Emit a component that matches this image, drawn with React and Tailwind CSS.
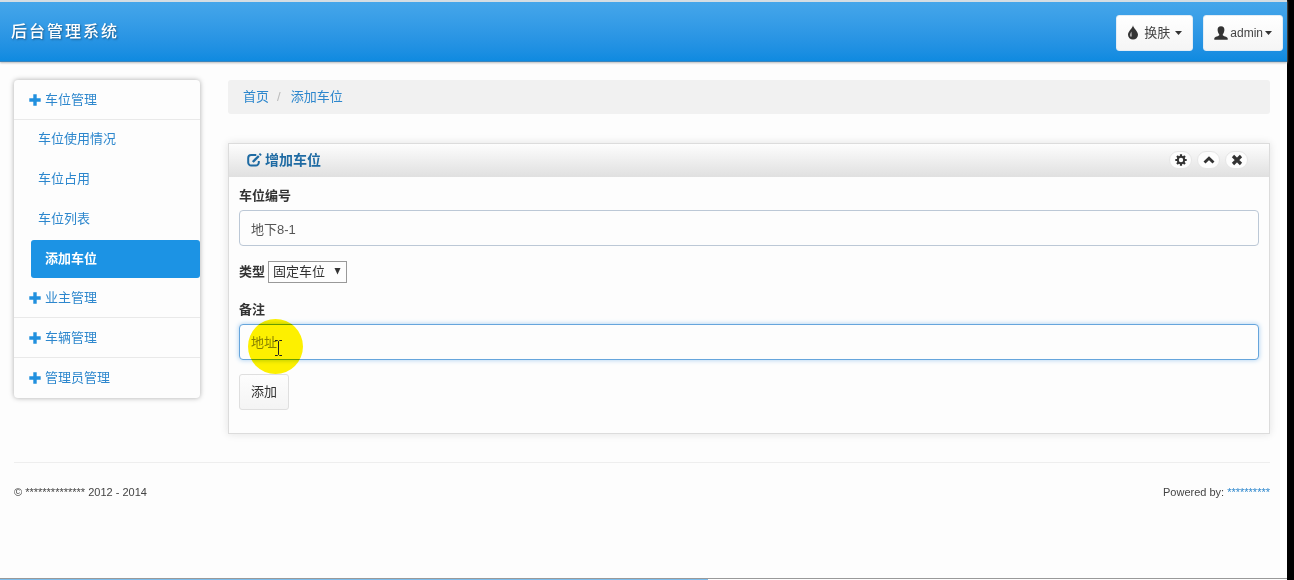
import React from "react";

function PlusIcon() {
  return (
    <svg className="h-3 w-3 shrink-0" viewBox="0 0 12 12" fill="#2190de" aria-hidden="true">
      <path d="M4.3 0.3h3.4v4h4v3.4h-4v4H4.3v-4h-4V4.3h4z" />
    </svg>
  );
}

function DropIcon() {
  return (
    <svg className="h-[15px] w-3 shrink-0" viewBox="0 0 12 15" fill="#333" aria-hidden="true">
      <path d="M6 0.3C6.4 3.6 11 6 11 9.8A5 4.8 0 0 1 1 9.8C1 6 5.6 3.6 6 0.3z" />
      <path d="M4.6 6.6C3.6 8 2.7 9 2.9 10.8c0.3 0.9 1.2 1.2 1.7 0.6C5.2 10.4 4.5 8.6 4.6 6.6z" fill="#a8a8a8" />
    </svg>
  );
}

function UserIcon() {
  return (
    <svg className="h-[14px] w-[14px] shrink-0" viewBox="0 0 14 14" fill="#333" aria-hidden="true">
      <path d="M7 0.3C9.4 0.3 10.5 1.9 10.4 4C10.3 6 9.6 7.2 8.8 8.2V9.3C8.9 10 13.4 10.9 13.7 12.2V13.7H0.3V12.2C0.6 10.9 5.1 10 5.2 9.3V8.2C4.4 7.2 3.7 6 3.6 4C3.5 1.9 4.6 0.3 7 0.3z" />
    </svg>
  );
}

function CaretIcon() {
  return (
    <svg className="h-1 w-[7px] shrink-0" viewBox="0 0 7 4" fill="#333" aria-hidden="true">
      <path d="M0 0h7L3.5 4z" />
    </svg>
  );
}

function EditIcon() {
  return (
    <svg className="h-[14px] w-[15px] shrink-0" viewBox="0 0 15 14" fill="none" stroke="#1f6ba3" aria-hidden="true">
      <path d="M9.3 2H4.2A3 3 0 0 0 1.2 5v4.5a3 3 0 0 0 3 3h4.6a3 3 0 0 0 3-3V8" strokeWidth="2" />
      <path d="M5.8 9L11.8 3" strokeWidth="2.4" />
      <path d="M12.6 2.2l1.3-1.3" strokeWidth="2.4" />
    </svg>
  );
}

function CogIcon() {
  return (
    <svg className="h-3 w-3" viewBox="0 0 12 12" aria-hidden="true">
      <g stroke="#333" strokeWidth="2.2">
        <path d="M6 0.3V2.5M6 9.5V11.7M0.3 6H2.5M9.5 6H11.7M2 2L3.4 3.4M8.6 8.6L10 10M10 2L8.6 3.4M3.4 8.6L2 10" />
      </g>
      <circle cx="6" cy="6" r="3.2" fill="none" stroke="#333" strokeWidth="2" />
    </svg>
  );
}

function ChevronUpIcon() {
  return (
    <svg className="h-3 w-3" viewBox="0 0 12 12" fill="none" stroke="#333" strokeWidth="2.8" aria-hidden="true">
      <path d="M1.5 8.6L6 4.2L10.5 8.6" />
    </svg>
  );
}

function RemoveIcon() {
  return (
    <svg className="h-3 w-3" viewBox="0 0 12 12" fill="none" stroke="#333" strokeWidth="3.2" aria-hidden="true">
      <path d="M2 2L10 10M10 2L2 10" />
    </svg>
  );
}

function TextCursor() {
  return (
    <svg className="h-4 w-[7px]" viewBox="0 0 7 16" fill="none" stroke="#222" aria-hidden="true">
      <path d="M0 0.5H2.5L3.5 1.5L4.5 0.5H7M3.5 1.5V14.5M0 15.5H2.5L3.5 14.5L4.5 15.5H7" />
    </svg>
  );
}

function HeaderButton({ icon, children }) {
  return (
    <button
      type="button"
      className="flex h-9 items-center gap-0.5 rounded-[3px] border border-[#e3edf5] bg-linear-to-b from-white to-[#f5f5f5] px-[10px] text-[#444]"
    >
      {icon}
      {children}
      <CaretIcon />
    </button>
  );
}

function MenuGroup({ label, items = [], last = false }) {
  return (
    <li>
      <a
        href="#"
        className={
          "flex h-10 items-center gap-1 pl-[15px] " +
          (last ? "" : "border-b border-[#e9e9e9]")
        }
      >
        <PlusIcon />
        <span>{label}</span>
      </a>
      {items.length > 0 && (
        <ul className="flex flex-col gap-0.5">
          {items.map((item) => (
            <li key={item.label}>
              {item.active ? (
                <a href="#" className="ml-[17px] flex h-[38px] items-center rounded-[3px] bg-[#1c93e4] pl-[14px] font-bold text-white">
                  {item.label}
                </a>
              ) : (
                <a href="#" className="flex h-[38px] items-center pl-6">
                  {item.label}
                </a>
              )}
            </li>
          ))}
        </ul>
      )}
    </li>
  );
}

function RoundButton({ label, children }) {
  return (
    <button
      type="button"
      aria-label={label}
      className="flex h-[18px] w-[23px] items-center justify-center rounded-full border border-[#e6e6e6] bg-[#fdfdfd]"
    >
      {children}
    </button>
  );
}

const parkingItems = [
  { label: "车位使用情况" },
  { label: "车位占用" },
  { label: "车位列表" },
  { label: "添加车位", active: true },
];

export default function App() {
  return (
    <div className="flex min-h-screen bg-black font-['Liberation_Sans','Noto_Sans_CJK_SC',sans-serif] text-[13px] leading-5 text-[#444]">
      <div className="mr-[7px] flex min-w-0 flex-1 flex-col bg-[#fdfdfd]">
        <header className="flex h-[62px] items-center justify-between border-t-2 border-b border-t-[#d5dde3] border-b-[#3b85bd] bg-linear-to-b from-[#45a6ea] to-[#0e8ae0] pr-1 pl-[11px] shadow-[0_1px_2px_#bbb]">
          <a href="#" className="text-base leading-5 font-medium tracking-[2px] text-white [text-shadow:1px_1px_2px_#1d5a88]">
            后台管理系统
          </a>
          <div className="flex gap-[10px] pt-[2px]">
            <HeaderButton icon={<DropIcon />}>
              <span className="px-[3px]">换肤</span>
            </HeaderButton>
            <HeaderButton icon={<UserIcon />}>
              <span className="text-xs">admin</span>
            </HeaderButton>
          </div>
        </header>

        <div className="flex items-start gap-7 pt-[18px] pr-[17px] pl-[14px] text-[#2d87cd]">
          <nav className="w-[186px] shrink-0 rounded-[4px] bg-[#fdfdfd] shadow-[0_0_5px_#aaa]">
            <ul>
              <MenuGroup label="车位管理" items={parkingItems} />
              <MenuGroup label="业主管理" />
              <MenuGroup label="车辆管理" />
              <MenuGroup label="管理员管理" last />
            </ul>
          </nav>

          <main className="min-w-0 flex-1">
            <nav className="flex h-[34px] items-center gap-2 rounded-[3px] bg-[#f1f1f1] pl-[15px]">
              <a href="#">首页</a>
              <span className="text-[#bbb]">/</span>
              <a href="#" className="pl-0.5">添加车位</a>
            </nav>

            <section className="mt-[29px] border border-[#dcdcdc] text-[#333] shadow-[0_0_8px_#e2e2e2]">
              <div className="flex h-[33px] items-center justify-between bg-linear-to-b from-[#fdfdfd] to-[#e0e0e0] pr-[21px] pb-px pl-[18px]">
                <h2 className="flex items-center gap-[3px] text-sm leading-5 font-bold text-[#1f6ba3]">
                  <EditIcon />
                  增加车位
                </h2>
                <div className="flex gap-[5px]">
                  <RoundButton label="设置"><CogIcon /></RoundButton>
                  <RoundButton label="收起"><ChevronUpIcon /></RoundButton>
                  <RoundButton label="关闭"><RemoveIcon /></RoundButton>
                </div>
              </div>

              <form className="px-[10px] pt-[9px] pb-[23px]">
                <label htmlFor="code" className="block font-bold">车位编号</label>
                <input
                  id="code"
                  type="text"
                  defaultValue="地下8-1"
                  className="mt-1 block h-9 w-full rounded-[4px] border border-[#bcc8d6] bg-[#fdfdfd] px-[11px] text-[#555]"
                />

                <div className="mt-[15px] flex items-center gap-[3px]">
                  <label htmlFor="type" className="font-bold">类型</label>
                  <div className="relative">
                    <select
                      id="type"
                      className="block h-[22px] w-[79px] appearance-none rounded-none border border-[#999] bg-[#fdfdfd] pl-1 leading-5"
                    >
                      <option>固定车位</option>
                    </select>
                    <svg className="pointer-events-none absolute top-[7px] right-[6px] h-[7px] w-[7px]" viewBox="0 0 7 7" fill="#333" aria-hidden="true">
                      <path d="M0.5 0h6L3.5 6.5z" />
                    </svg>
                  </div>
                </div>

                <label htmlFor="note" className="mt-[17px] block font-bold">备注</label>
                <div className="relative mt-1">
                  <input
                    id="note"
                    type="text"
                    placeholder="地址"
                    className="block h-9 w-full rounded-[4px] border border-[#66a5dc] bg-[#fdfdfd] px-[11px] shadow-[0_0_5px_#a5cdf0] placeholder:text-[#888]"
                  />
                  <div className="pointer-events-none absolute top-[-5px] left-[9px] h-[55px] w-[55px] rounded-full bg-[#fff200] mix-blend-multiply" />
                  <div className="pointer-events-none absolute top-4 left-9">
                    <TextCursor />
                  </div>
                </div>

                <button
                  type="button"
                  className="mt-[14px] block h-9 rounded-[3px] border border-[#dfdfdf] bg-linear-to-b from-[#fdfdfd] to-[#f4f4f4] px-[11px]"
                >
                  添加
                </button>
              </form>
            </section>
          </main>
        </div>

        <footer className="mt-7 mr-[17px] ml-[14px] flex justify-between border-t border-[#eee] pt-[19px] text-[11px] leading-5">
          <p>© ************** 2012 - 2014</p>
          <p>
            Powered by: <a href="#" className="text-[#2d87cd]">**********</a>
          </p>
        </footer>

        <div className="mt-auto border-t border-[#999]">
          <div className="h-px w-[55%] bg-[#7cbdec]" />
        </div>
      </div>
    </div>
  );
}
